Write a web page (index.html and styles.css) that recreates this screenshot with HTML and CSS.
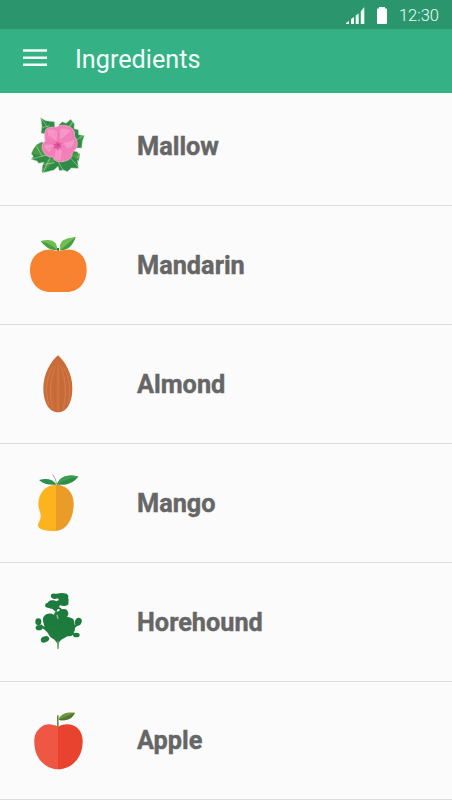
FILE: index.html
```html
<!DOCTYPE html>
<html lang="en">
<head>
<meta charset="utf-8">
<title>Ingredients</title>
<link rel="stylesheet" href="styles.css">
</head>
<body>
<div class="status">
  <svg class="signal" width="19" height="17" viewBox="0 0 19 17"><path d="M0 17v-1l3-2v3zM5 17v-5l3-2v7zM9.700 17V8.500l3-2V17zM14.800 17V4.500L18.300 0v17z"/></svg>
  <svg class="battery" width="10" height="17" viewBox="0 0 10 17"><path d="M2 0h6v1.500h1.200q.8 0 .8.800V16q0 1-1 1H1q-1 0-1-1V2.300q0-.8.800-.8H2z"/></svg>
  <span class="time">12:30</span>
</div>
<header class="bar">
  <svg class="menu" width="24" height="18" viewBox="0 0 24 18"><path d="M0 .3h24v2.500H0zM0 7.600h24v2.500H0zM0 14.600h24v2.500H0z"/></svg>
  <h1 class="title">Ingredients</h1>
</header>
<main class="view">
<ul class="list">
  <li class="row">
    <svg class="icon" viewBox="0 0 228 228">
      <g fill="#2f8b45" stroke="#b9dcae" stroke-width="1.500">
        <path d="M62 29l15 9 26 3 3 26-15 15-28-7 3-20z"/>
        <path d="M116 51l11-10 11 5 14-12 11 13-1 15 13 3 1 15 17 3-6 17-2 20-20 0z"/>
        <path d="M64 102l-15 9-10 14-5 12 6 8-6 9 17 5 5 7 16-3-5 12-1 19 16-3 20-5 12-11 4 13 13-2 11 5 12-11 21 1-2-24 4-11-4-14z"/>
      </g>
      <path fill="#479b49" d="M64 104l-15 8-12 26 44 8 3-25zM84 153l26-1-36 37-6-5zM163 135l17 2-4 22-22-16zM151 36l10 12-15 15zM176 82l12 3-6 15z"/>
      <path fill="none" stroke="#c4e5b8" stroke-width="1.600" d="M62 30l24 32M68 59l21-6M162 36l-21 31M190 83l-24 15M34 153l46-12M48 112l19 34M70 192l22-47M73 169l31-5M130 188l-17-30M176 177l-31-34M172 150l8-17"/>
      <path fill="#f37fb9" stroke="#f9bbd9" stroke-width="2" d="M78 64c9-8 22-6 31-7 13-8 28-6 39-1 11 5 19 15 15 28 11 13 12 31 2 43-5 5-9 7-9 15-3 11-14 17-28 19-15 1-26-2-30-14-13 1-24-6-27-16-8-10-5-24 4-32-1-12-3-25 3-35z"/>
      <path fill="#f797c8" d="M82 66q18-6 28 4l2 30-27-17zM118 66q18-10 33 3l-29 28zM130 104l32-8q2 20-20 27zM73 110l30 0-15 21q-15-4-15-21zM107 126l18 0-2 27q-9 6-20 0z"/>
      <path fill="none" stroke="#e76fae" stroke-width="1" d="M113 108L84 73M113 108l-10-42M114 108l4-46M114 108l35-34M116 110l43-16M116 112l42 12M116 113l21 28M114 114v38M111 113l-19 29M110 112l-34 16M109 109l-34-7M110 107L77 91"/>
      <path fill="#e0529c" d="M113 99l4 7 8-1-4 7 4 6-8 1-3 7-5-6-8 1 3-8-6-4 9-2z"/>
      <circle cx="114" cy="111" r="3" fill="#c93a87"/>
    </svg>
    <span class="name">Mallow</span>
  </li>
  <li class="row">
    <svg class="icon" viewBox="0 3 228 228">
      <path fill="#f98230" d="M84 71c9-1 16 3 30 3s23-4 36-3c31 2 50 26 50 61 0 40-25 66-59 66H90c-34 0-60-26-60-66 0-35 22-59 54-61z"/>
      <path fill="#72be50" d="M62 45c19-6 38-4 45 7 4 6 4 14 5 20-22 1-35-9-50-27zM167 33c-18 2-38 6-44 17-5 8-3 15-3 23 26-1 38-15 47-40z"/>
      <path fill="#459f45" d="M62 45q29 7 50 27c-22 1-35-9-50-27zM167 33l-47 40c26-1 38-15 47-40z"/>
      <path fill="#367a36" d="M111 66h6v8h-6z"/>
    </svg>
    <span class="name">Mandarin</span>
  </li>
  <li class="row">
    <svg class="icon" viewBox="0 0 228 228">
      <path fill="#c96c3a" d="M114 28c20 18 43 54 43 98 0 42-15 73-43 73s-44-31-44-73c0-43 23-80 44-98z"/>
      <path fill="none" stroke="#d57f4d" stroke-width="2.500" d="M99 63C76 97 75 146 88 177M107 60c-18 36-19 86-9 130M114 55v139M121 60c18 36 18 86 9 130M130 63c22 35 23 83 11 114"/>
      <path fill="none" stroke="#bd6333" stroke-width="1.200" d="M103 63c-22 35-23 83-10 121M111 60c-8 36-10 89-3 134M118 60c9 36 10 89 3 134M126 63c22 35 23 83 10 121"/>
    </svg>
    <span class="name">Almond</span>
  </li>
  <li class="row">
    <svg class="icon" viewBox="0 3 228 228">
      <path fill="#fcb31d" d="M108 62c-31 0-53 25-53 59 0 15 8 24 7 38-1 12-7 16-8 24-2 13 26 19 54 18z"/>
      <path fill="#e99c27" d="M108 62c31 0 53 23 53 57 0 46-22 80-53 82z"/>
      <path fill="none" stroke="#777b72" stroke-width="2" d="M110 60q-3-18-12-28"/>
      <path fill="#2c8e49" d="M110 62c-13-16-28-20-53-14 13 12 31 16 53 14zM111 62c7-25 36-33 64-24-14 18-36 27-64 24z"/>
      <path fill="#3f9e54" d="M111 62c7-25 36-33 64-24q-36 5-64 24z"/>
    </svg>
    <span class="name">Mango</span>
  </li>
  <li class="row">
    <svg class="icon" viewBox="0 0 228 228">
      <g fill="#1d7b3e">
        <path d="M93 32q4-5 12-3 8 1 13-1 8-2 14 0 10 0 12 6 3 4 0 8 4 5 1 11 3 10-8 12-9 2-17-2l-3 7q6 1 9 6 12-4 17 5 5 12-3 17l3 10q-1 5-8 4h-14q-9 1-10-6l-7-8q-5-9 3-15-5-5-11-9-5 1-9-2-11 0-12-8 1-8 8-8 3-6 11-7 10-2 15 3l8-4-4-5q-8 3-13 1-10-5-7-12z"/>
        <path d="M110 102C104 86 80 84 71 98c-6 11 2 20 2 31-1 9 6 12 11 18 3 9 8 13 15 17 6 4 10 8 13 15h4c2-8 7-12 13-15 7-2 9-6 14-7 13 1 20-5 20-15 4-7 2-17 0-24 1-8-3-15-10-16-12-5-29-8-43 0z"/>
        <ellipse cx="55" cy="113" rx="9" ry="10"/>
        <ellipse cx="57" cy="131" rx="10" ry="8"/>
        <ellipse cx="75" cy="166" rx="13" ry="9" transform="rotate(-25 75 166)"/>
        <ellipse cx="175" cy="113" rx="10" ry="12" transform="rotate(20 175 113)"/>
        <ellipse cx="169" cy="153" rx="10" ry="7"/>
        <path d="M62 120l18 14-3 5-17-10zM162 125l10-9 2 8-14 12z"/>
      </g>
      <path fill="#fbfbfb" d="M111 78q4-5 8-2l-1 5-8 2z"/>
      <path fill="#8cba96" d="M109 92h4l3 12h-5z"/>
      <path fill="none" stroke="#2a8549" stroke-width="1.200" d="M79 131h31M92 151l21 14M134 141l-21 31M114 125v45M125 117l9 16M82 146l19 8"/>
      <path fill="#629f68" d="M111 172h6l-1 23h-4z"/>
    </svg>
    <span class="name">Horehound</span>
  </li>
  <li class="row">
    <svg class="icon" viewBox="0 2 228 228">
      <path fill="#ee5744" d="M115 73C93 64 77 62 60 77c-15 13-18 28-17 45 1 43 30 78 72 79z"/>
      <path fill="#e8432f" d="M115 73c18-10 42-10 57 4 13 12 17 27 16 45-2 43-30 78-74 79V73z"/>
      <path fill="#6b8f3a" d="M111 39h5v35h-5z"/>
      <path fill="#70953e" d="M115 52c8-20 28-23 50-21-9 20-29 26-50 21z"/>
      <path fill="#4f7932" d="M115 52q23-9 50-21c-9 20-29 26-50 21z"/>
    </svg>
    <span class="name">Apple</span>
  </li>
</ul>
</main>
</body>
</html>
```
FILE: styles.css
```css
* { box-sizing: border-box; }
body {
  margin: 0;
  width: 452px;
  height: 800px;
  overflow: hidden;
  display: flex;
  flex-direction: column;
  background: #fbfbfb;
  font-family: Roboto, "Liberation Sans", sans-serif;
}
.status {
  flex: none;
  height: 29px;
  padding: 2px 13px 0 0;
  display: flex;
  justify-content: flex-end;
  align-items: center;
  background: #2b966e;
  color: #e9fff6;
}
.signal { fill: #f2fff9; margin-right: 12px; }
.battery { fill: #fff; margin-right: 12px; }
.time { font-size: 16.500px; font-weight: 300; line-height: 20px; }
.bar {
  flex: none;
  height: 64px;
  padding: 0 23px 3px;
  display: flex;
  align-items: center;
  background: #34b185;
  color: #f2fff9;
}
.menu { fill: #f2fff9; margin: -4px 28px 0 0; }
.title { margin: 0; font-size: 25.200px; font-weight: 400; line-height: 30px; }
.view { flex: 1; overflow: hidden; }
.list { margin: -6px 0 0; padding: 0; list-style: none; }
.row {
  height: 119px;
  padding-left: 20px;
  display: flex;
  align-items: center;
  border-bottom: 1px solid #dcdcdc;
}
.row:last-child { height: 118px; }
.icon { width: 76px; height: 76px; margin-right: 41px; }
.name {
  padding-top: 1px;
  font-size: 25.300px;
  font-weight: 700;
  line-height: 30px;
  color: #666;
  -webkit-text-stroke: .4px #666;
}
```
